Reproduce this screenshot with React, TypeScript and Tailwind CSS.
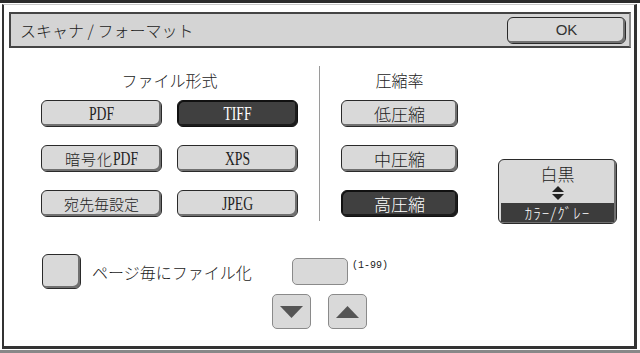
import React from "react";
import clsx from "clsx";

function Btn({
  children,
  selected,
  className,
}: {
  children?: React.ReactNode;
  selected?: boolean;
  className?: string;
}) {
  return (
    <div
      className={clsx(
        "flex items-center justify-center rounded-[6px] border",
        selected
          ? "bg-[#404040] border-[#111] text-white shadow-[inset_-2px_-2px_0_#1c1c1c,inset_1px_1px_0_#111]"
          : "bg-[#d9d9d9] border-[#2a2a2a] text-[#222] shadow-[inset_-2px_-2px_0_#707070]",
        className
      )}
    >
      {children}
    </div>
  );
}

function Lat({ children }: { children: React.ReactNode }) {
  return (
    <span className="inline-block scale-x-[0.76] font-['Liberation_Serif',serif] text-[18px] leading-none">
      {children}
    </span>
  );
}

export default function App() {
  return (
    <div className="w-[640px] h-[353px] bg-white overflow-hidden flex flex-col font-['Noto_Sans_CJK_JP','Noto_Sans',sans-serif] font-light text-[#222]">
      <div className="h-[3px] bg-[#2b2b2b] shrink-0" />
      <div className="h-[1px] shrink-0" />
      <div className="ml-[2px] w-[635px] h-[345px] shrink-0 border-l-2 border-r-[3px] border-b-[3px] border-t border-t-[#c8c8c8] border-l-[#333] border-r-[#333] border-b-[#333] flex flex-col">
        {/* header */}
        <div className="mt-[7px] ml-[5px] w-[622px] h-[36px] shrink-0 border-2 border-[#444] border-r-[#8a8a8a] bg-[#d4d4d4] flex items-center justify-between pl-[9px] pr-[3px]">
          <span className="text-[16px] leading-none text-[#222]">スキャナ / フォーマット</span>
          <Btn className="w-[119px] h-[27px]">
            <span className="font-['Liberation_Sans',sans-serif] text-[15px] text-[#333]">OK</span>
          </Btn>
        </div>

        {/* main row */}
        <div className="mt-[18px] pl-[37px] flex items-start">
          <div className="w-[257px] flex flex-col">
            <div className="h-[28px] mb-[6px] flex items-center justify-center text-[16px]">ファイル形式</div>
            <div className="grid grid-cols-[121px_121px] gap-x-[15px] gap-y-[18px]">
              <Btn className="h-[27px]">
                <Lat>PDF</Lat>
              </Btn>
              <Btn selected className="h-[27px]">
                <Lat>TIFF</Lat>
              </Btn>
              <Btn className="h-[27px]">
                <span className="text-[15px] leading-none tracking-[1px]">暗号化</span>
                <span className="inline-block origin-left scale-x-[0.76] font-['Liberation_Serif',serif] text-[18px] leading-none -mr-[8px]">PDF</span>
              </Btn>
              <Btn className="h-[27px]">
                <Lat>XPS</Lat>
              </Btn>
              <Btn className="h-[27px]">
                <span className="text-[15px] leading-none">宛先毎設定</span>
              </Btn>
              <Btn className="h-[27px]">
                <Lat>JPEG</Lat>
              </Btn>
            </div>
          </div>

          <div className="ml-[21px] w-px h-[155px] bg-[#9a9a9a]" />

          <div className="ml-[21px] w-[117px] flex flex-col">
            <div className="h-[28px] mb-[6px] flex items-center justify-center text-[16px]">圧縮率</div>
            <div className="flex flex-col gap-[18px]">
              <Btn className="h-[27px]">
                <span className="text-[17px] leading-none">低圧縮</span>
              </Btn>
              <Btn className="h-[27px]">
                <span className="text-[17px] leading-none">中圧縮</span>
              </Btn>
              <Btn selected className="h-[27px]">
                <span className="text-[17px] leading-none">高圧縮</span>
              </Btn>
            </div>
          </div>

          <div className="ml-[40px] mt-[93px] w-[119px] h-[65px] rounded-[6px] border border-[#2a2a2a] bg-[#d9d9d9] shadow-[inset_-2px_-2px_0_#707070] flex flex-col items-center overflow-hidden pt-[4px]">
            <div className="h-[20px] leading-[20px] text-[17px]">白黒</div>
            <svg width="12" height="14" viewBox="0 0 12 14" className="mt-[2px]">
              <polygon points="0,6 12,6 6,0" fill="#222" />
              <polygon points="0,8 12,8 6,14" fill="#222" />
            </svg>
            <div className="mt-auto mb-[1px] self-stretch mx-[2px] h-[19px] bg-[#3c3c3c] text-white flex items-center justify-center text-[15px] leading-none tracking-[1px]">
              ｶﾗｰ/ｸﾞﾚｰ
            </div>
          </div>
        </div>

        {/* bottom row */}
        <div className="mt-[30px] pl-[38px] flex items-start">
          <Btn className="w-[39px] h-[35px]" />
          <div className="ml-[11px] w-[180px] h-[35px] flex items-center text-[16px]">ページ毎にファイル化</div>
          <div className="flex flex-col">
            <div className="pl-[20px] mt-[4px] flex items-start">
              <div className="w-[56px] h-[27px] rounded-[5px] border border-[#8a8a8a] bg-[#d9d9d9]" />
              <span className="ml-[4px] mt-[2px] font-['Liberation_Mono',monospace] font-normal text-[10px] leading-[12px] text-[#222]">(1-99)</span>
            </div>
            <div className="mt-[9px] flex gap-[17px]">
              <div className="w-[39px] h-[35px] rounded-[5px] border border-[#8a8a8a] bg-[#d9d9d9] flex items-center justify-center">
                <svg width="23" height="12" viewBox="0 0 23 12">
                  <polygon points="0,0 23,0 11.5,12" fill="#555" />
                </svg>
              </div>
              <div className="w-[39px] h-[35px] rounded-[5px] border border-[#8a8a8a] bg-[#d9d9d9] flex items-center justify-center">
                <svg width="23" height="12" viewBox="0 0 23 12">
                  <polygon points="0,12 23,12 11.5,0" fill="#555" />
                </svg>
              </div>
            </div>
          </div>
        </div>
      </div>
      <div className="h-[1px] shrink-0" />
      <div className="h-[4px] bg-[#888] shrink-0" />
    </div>
  );
}
